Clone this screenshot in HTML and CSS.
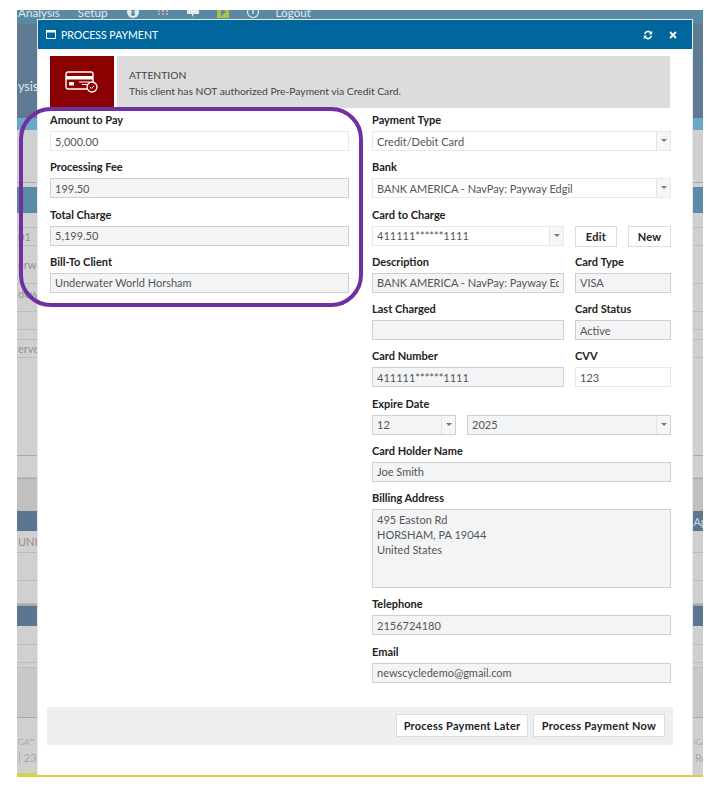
FILE: index.html
```html
<!DOCTYPE html>
<html lang="en-US">
<head>
  <meta charset="utf-8">
  <title>Process Payment</title>
  <link rel="stylesheet" href="styles.css">
</head>
<body>
  <div class="screen">
    <!-- page behind the dialog, only the edges show -->
    <div class="band nav">
      <span class="nav-item nav-word">Analysis</span>
      <span class="nav-item nav-word">Setup</span>
      <svg class="nav-icon" width="14" height="14" viewBox="0 0 14 14"><circle cx="7" cy="7" r="6" fill="#dfe9ee"/><circle cx="7" cy="5" r="2" fill="#5a8aa3"/><circle cx="7" cy="9" r="2" fill="#5a8aa3"/></svg>
      <svg class="nav-icon" width="14" height="14" viewBox="0 0 14 14"><rect x="2" y="5" width="2" height="2" fill="#b9a3c9"/><rect x="6" y="5" width="2" height="2" fill="#c9b98a"/><rect x="10" y="5" width="2" height="2" fill="#9fc3a3"/><rect x="2" y="8" width="2" height="2" fill="#9fb7cf"/><rect x="6" y="8" width="2" height="2" fill="#cf9f9f"/><rect x="10" y="8" width="2" height="2" fill="#b9a3c9"/></svg>
      <svg class="nav-icon" width="14" height="14" viewBox="0 0 14 14"><path d="M1 0h12v9H8l-2 3V9H1z" fill="#dfe9ee"/></svg>
      <svg class="nav-icon" width="14" height="14" viewBox="0 0 14 14"><rect x="1" y="1" width="12" height="12" fill="#a7c24a"/><path d="M5 3l5 4-5 4z" fill="#5a8aa3"/></svg>
      <svg class="nav-icon" width="14" height="14" viewBox="0 0 14 14"><circle cx="7" cy="7" r="5.5" fill="none" stroke="#dfe9ee" stroke-width="1.2"/><path d="M7 5v4" stroke="#dfe9ee" stroke-width="1.4"/></svg>
      <span class="nav-item">Logout</span>
    </div>
    <div class="band hero"><span class="edge-text hero-text">ysis</span></div>
    <div class="band sky"></div>
    <div class="band plain b53"></div>
    <div class="band steel"></div>
    <div class="band row b15"></div>
    <div class="band row b18"><span class="edge-text">01</span></div>
    <div class="band row b38"><span class="edge-text">erw</span></div>
    <div class="band row b28"><span class="edge-text up">dew</span></div>
    <div class="band row b18"></div>
    <div class="band row b10"></div>
    <div class="band row b18"><span class="edge-text">erve</span></div>
    <div class="band row b98"></div>
    <div class="band row b22"></div>
    <div class="band dark"></div>
    <div class="band slate"><span class="edge-text"></span><span class="edge-text right-text">Ap</span></div>
    <div class="band row b22"><span class="edge-text">UNIC</span></div>
    <div class="band row b28"></div>
    <div class="band row b23"></div>
    <div class="band gap2"></div>
    <div class="band slate"></div>
    <div class="band row b19"></div>
    <div class="band row b18"></div>
    <div class="band row b5"></div>
    <div class="band row b50"></div>
    <div class="band footer-band">
      <span class="edge-text tiny">GA™ 2</span><span class="edge-text tiny right-text">IGA</span>
    </div>
    <div class="band footer-band second">
      <span class="edge-text">| 230</span><span class="edge-text right-text">Re</span>
    </div>
    <div class="band yellow"></div>
  </div>

  <div class="modal">
    <div class="modal-head">
      <svg class="win-icon" width="10" height="9" viewBox="0 0 10 9"><path d="M.5.5h9v8h-9z" fill="none" stroke="#fff"/><path d="M0 0h10v2.5H0z" fill="#fff"/></svg>
      <span class="modal-title">PROCESS PAYMENT</span>
      <svg class="head-btn" width="12" height="12" viewBox="0 0 12 12"><path d="M2 5a4 4 0 0 1 7-2l1.2-1.2V5.400H6.800L8 4.200A2.600 2.600 0 0 0 3.500 5.300z" fill="#fff"/><path d="M10 7a4 4 0 0 1-7 2l-1.200 1.200V6.600h3.400L4 7.800a2.600 2.600 0 0 0 4.500-1.100z" fill="#fff"/></svg>
      <svg class="head-btn close-btn" width="10" height="10" viewBox="0 0 10 10"><path d="M2 2l6 6M8 2l-6 6" stroke="#fff" stroke-width="1.800"/></svg>
    </div>

    <div class="alert">
      <div class="alert-icon">
        <svg width="34" height="22" viewBox="0 0 34 22">
          <rect x="1" y="1" width="27" height="17" rx="2" fill="none" stroke="#fff" stroke-width="1.400"/>
          <rect x="1" y="5" width="27" height="3.500" fill="#fff"/>
          <rect x="4" y="11" width="5" height="3.500" rx="1" fill="#fff"/>
          <path d="M14 11h11M17 13.500h7" stroke="#fff"/>
          <circle cx="27" cy="16" r="5" fill="#8b0000" stroke="#fff" stroke-width="1.300"/>
          <path d="M24.800 16l1.600 1.500 2.800-2.800" fill="none" stroke="#fff"/>
        </svg>
      </div>
      <div class="alert-text">
        <div>ATTENTION</div>
        <div>This client has NOT authorized Pre-Payment via Credit Card.</div>
      </div>
    </div>

    <div class="columns">
      <div class="col">
        <div class="field"><label>Amount to Pay</label><div class="input">5,000.00</div></div>
        <div class="field"><label>Processing Fee</label><div class="input off">199.50</div></div>
        <div class="field"><label>Total Charge</label><div class="input off">5,199.50</div></div>
        <div class="field"><label>Bill-To Client</label><div class="input off">Underwater World Horsham</div></div>
      </div>

      <div class="col">
        <div class="field"><label>Payment Type</label><div class="input select"><span class="val">Credit/Debit Card</span><span class="arrow"></span></div></div>
        <div class="field"><label>Bank</label><div class="input select"><span class="val">BANK AMERICA - NavPay: Payway Edgil</span><span class="arrow"></span></div></div>
        <div class="split">
          <div class="field main"><label>Card to Charge</label><div class="input select"><span class="val">411111******1111</span><span class="arrow"></span></div></div>
          <div class="btn-pair"><button class="btn btn-edit">Edit</button><button class="btn btn-new">New</button></div>
        </div>
        <div class="split">
          <div class="field main"><label>Description</label><div class="input off"><span class="val">BANK AMERICA - NavPay: Payway Edgil</span></div></div>
          <div class="field side"><label>Card Type</label><div class="input off">VISA</div></div>
        </div>
        <div class="split">
          <div class="field main"><label>Last Charged</label><div class="input off"></div></div>
          <div class="field side"><label>Card Status</label><div class="input off">Active</div></div>
        </div>
        <div class="split">
          <div class="field main"><label>Card Number</label><div class="input off">411111******1111</div></div>
          <div class="field side"><label>CVV</label><div class="input">123</div></div>
        </div>
        <div class="field">
          <label>Expire Date</label>
          <div class="expire">
            <div class="input select off month"><span class="val">12</span><span class="arrow"></span></div>
            <div class="input select off year"><span class="val">2025</span><span class="arrow"></span></div>
          </div>
        </div>
        <div class="field"><label>Card Holder Name</label><div class="input off">Joe Smith</div></div>
        <div class="field"><label>Billing Address</label><div class="input off area">495 Easton Rd<br>HORSHAM, PA 19044<br>United States</div></div>
        <div class="field"><label>Telephone</label><div class="input off">2156724180</div></div>
        <div class="field"><label>Email</label><div class="input off">newscycledemo@gmail.com</div></div>
      </div>
    </div>

    <div class="modal-foot">
      <button class="btn btn-wide">Process Payment Later</button>
      <button class="btn btn-wide">Process Payment Now</button>
    </div>
  </div>

  <div class="ring"></div>
</body>
</html>
```

FILE: styles.css
```css
* {box-sizing: border-box;}
html, body {margin: 0; height: 100%; background: #fff; overflow: hidden;}
body {font-family: Lato, "Noto Sans", Arial, sans-serif; font-size: 11px; color: #555;}

/* page behind the dialog */
.screen {display: flex; flex-direction: column; width: 686px; height: 767px; margin: 10px 0 0 17px; background: #d0d0d0; overflow: hidden;}
.band {display: flex; justify-content: space-between; align-items: center; flex: none; width: 100%; color: #929292; overflow: hidden; white-space: nowrap;}
.edge-text {font-size: 11px; margin-left: 1px;}
.up {margin-bottom: 8px;}
.right-text {margin-right: -4px;}
.tiny {font-size: 8px; color: #aaa;}

.nav {justify-content: flex-start; align-items: flex-start; height: 14px; background: #5a8aa3; color: #dfe9ee; gap: 16px; padding-left: 1px;}
.nav-item {font-size: 11.700px; line-height: 5px;}
.nav-word {margin-right: 2px;}
.nav-icon {flex: none; margin-top: -5px;}
.hero {height: 94px; background: #5f7b94; color: #dfe6ec; padding-top: 30px;}
.hero-text {font-size: 12.500px;}
.sky {height: 12px; background: #6ba8c8;}
.plain {background: #d0d0d0;}
.b53 {height: 53px; border-bottom: 1px solid #a8a8a8;}
.steel {height: 30px; border-top: 4px solid #d0d0d0; background: #5a8ba8;}
.row {background: #d0d0d0; border-bottom: 1px solid #bcbcbc;}
.b5 {height: 5px;}
.b10 {height: 10px;}
.b15 {height: 15px;}
.b18 {height: 18px;}
.b19 {height: 19px;}
.b22 {height: 22px;}
.b23 {height: 23px;}
.b28 {height: 28px;}
.b38 {height: 38px;}
.b50 {height: 50px; background: #c8c8c8; border-bottom-color: #a8a8a8;}
.b98 {height: 98px; border-bottom-color: #a8a8a8;}
.dark {height: 33px; background: #c0c0c0; border-top: 1px solid #a8a8a8;}
.slate {height: 20px; background: #5b7690; color: #cfd8e0;}
.gap2 {height: 2px; background: #a8a8a8;}
.footer-band {height: 27px; padding-top: 21px; color: #a8a8a8;}
.footer-band.second {height: 28px; padding: 0 0 4px;}
.yellow {flex: 1; background: linear-gradient(#d4d44c, #d4d44c) left / 50% 100% no-repeat, linear-gradient(#d0d0d0 50%, #d4d44c 50%);}

/* dialog */
.modal {position: absolute; left: 37px; top: 19px; width: 656px; height: 756px; background: #fff; border: 1px solid #e4e9ec; border-bottom: 0;}
.modal-head {display: flex; align-items: center; height: 29px; background: #01669b; color: #fff; padding: 0 14px 0 8px;}
.win-icon {flex: none; margin-right: 5px;}
.modal-title {flex: 1; font-size: 10.500px;}
.close-btn {margin-left: 14px;}

.alert {display: flex; gap: 3px; height: 52px; margin: 7px 22px 0 12px;}
.alert-icon {display: flex; align-items: center; justify-content: center; width: 64px; background: #8b0000;}
.alert-text {flex: 1; display: flex; flex-direction: column; justify-content: center; padding: 1px 12px 0; background: #dcdcdc; color: #444; font-size: 10.300px; line-height: 16px;}

.columns {display: flex; gap: 23px; margin: 0 22px 0 12px;}
.col {flex: none; width: 299px;}
.field {padding-top: 4px; margin-bottom: 4.250px;}
.field label {display: block; height: 19px; font-weight: 700; color: #222; line-height: 16px;}
.input {display: flex; align-items: center; height: 20px; padding: 0 4px; background: #fff; border: 1px solid #e9e9e9; color: #555; white-space: nowrap; overflow: hidden;}
.off {background: #f3f4f5; border-color: #cfcfcf;}
.select {padding-right: 0;}
.val {flex: 1; min-width: 0; overflow: hidden;}
.arrow {position: relative; flex: none; width: 14px; height: 100%; border-left: 1px solid #e4e4e4; background: #f6f6f6;}
.arrow::after {content: ""; position: absolute; left: 4px; top: 7px; border: 3px solid transparent; border-top: 3px solid #777; border-bottom: 0;}
.area {display: block; height: 79px; padding: 2px 4px; line-height: 15px;}

.split {display: flex; gap: 11px;}
.split .main {width: 192px; flex: none;}
.split .side {flex: 1;}
.btn-pair {flex: 1; display: flex; justify-content: space-between; padding-top: 23px;}
.btn {height: 21px; padding: 0; background: #fff; border: 1px solid #ddd; color: #222; font: 700 11px Lato, "Noto Sans", Arial, sans-serif; letter-spacing: .25px;}
.btn-edit {width: 42px;}
.btn-new {width: 43px;}
.expire {display: flex; gap: 11px;}
.month {width: 84px;}
.year {flex: 1;}

.modal-foot {display: flex; justify-content: flex-end; gap: 5px; height: 38px; margin: 20px 19px 0 9px; padding: 7px 8px 0 0; background: #efefef;}
.btn-wide {width: 132px; height: 23px;}

/* purple hand-drawn highlight */
.ring {position: absolute; left: 19px; top: 107px; width: 344px; height: 200px; border: 4px solid #7030a0; border-radius: 32px;}
```
